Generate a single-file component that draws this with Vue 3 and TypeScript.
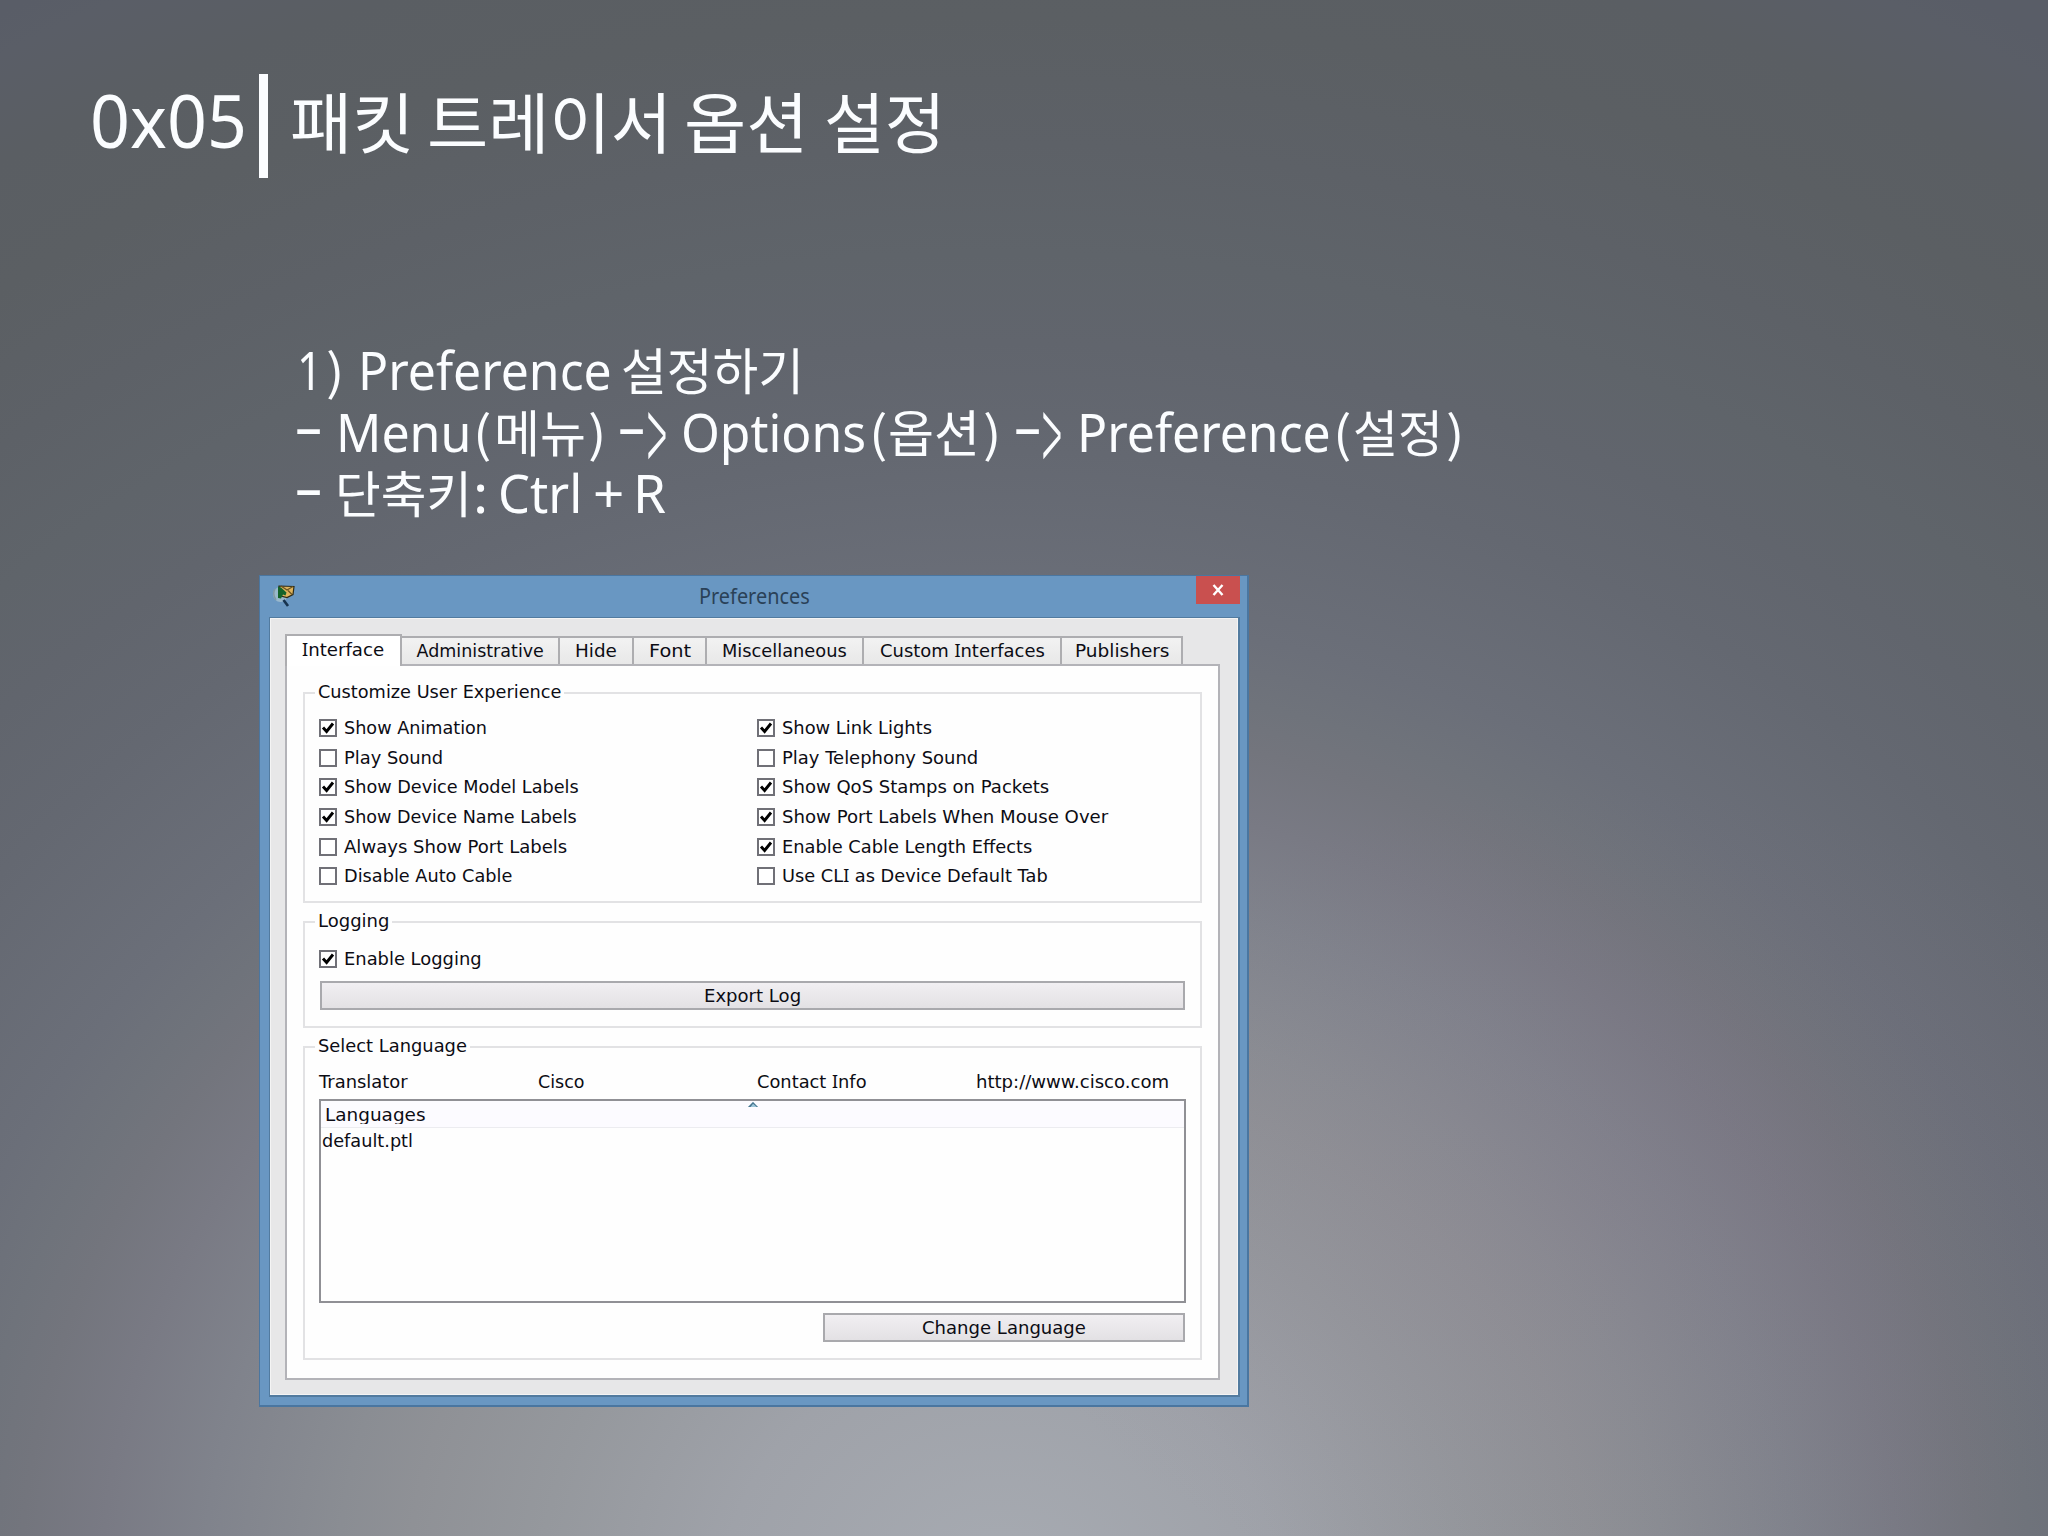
<script setup lang="ts">
import { defineComponent, h, onMounted, ref } from 'vue'

const Fit = defineComponent({
  props: {
    text: { type: String, required: true },
    w: { type: Number, required: true },
    sy: { type: Number, default: 1 },
  },
  setup(props) {
    const ink = ref<HTMLElement | null>(null)
    const scale = ref(1)
    onMounted(() => {
      if (ink.value) scale.value = props.w / ink.value.offsetWidth
    })
    return () =>
      h('span', { class: 'fit', style: { width: props.w + 'px' } }, [
        h(
          'span',
          { ref: ink, class: 'fit-ink', style: { transform: `scale(${scale.value}, ${props.sy})` } },
          props.text.split(/(I)/).filter(Boolean).map((p) => (p === 'I' ? h('span', { class: 'serif-i' }, p) : p)),
        ),
      ])
  },
})

interface Run { t: string; gap: number; w: number; k: string; sy?: number }
interface Option { t: string; w: number; on: boolean }

const title: Run[] = [
  { t: '패킷', gap: 0, w: 124, k: 'ko' },
  { t: '트레이서', gap: 13, w: 245, k: 'ko' },
  { t: '옵션', gap: 12, w: 124, k: 'ko' },
  { t: '설정', gap: 16, w: 121, k: 'ko' },
]

const lines: Run[][] = [
  [
    { t: '1', gap: -1, w: 25, k: 'la' },
    { t: ')', gap: 4, w: 19, k: 'pa' },
    { t: 'Preference', gap: 13, w: 254, k: 'la' },
    { t: '설정하기', gap: 9, w: 183, k: 'ko' },
  ],
  [
    { t: '-', gap: -4, w: 29, k: 'da' },
    { t: 'Menu', gap: 13, w: 135, k: 'la' },
    { t: '(', gap: 2, w: 19, k: 'pa' },
    { t: '메뉴', gap: 2, w: 92, k: 'ko' },
    { t: ')', gap: 2, w: 19, k: 'pa' },
    { t: '-', gap: 10, w: 29, k: 'da' },
    { t: '>', gap: 1, w: 20, k: 'gt', sy: 2.25 },
    { t: 'Options', gap: 14, w: 185, k: 'la' },
    { t: '(', gap: 3, w: 19, k: 'pa' },
    { t: '옵션', gap: 0, w: 92, k: 'ko' },
    { t: ')', gap: 3, w: 19, k: 'pa' },
    { t: '-', gap: 11, w: 29, k: 'da' },
    { t: '>', gap: 0, w: 20, k: 'gt', sy: 2.25 },
    { t: 'Preference', gap: 15, w: 254, k: 'la' },
    { t: '(', gap: 2, w: 19, k: 'pa' },
    { t: '설정', gap: 1, w: 90, k: 'ko' },
    { t: ')', gap: 3, w: 19, k: 'pa' },
  ],
  [
    { t: '-', gap: -4, w: 29, k: 'da' },
    { t: '단축키', gap: 12, w: 137, k: 'ko' },
    { t: ':', gap: 1, w: 15, k: 'la' },
    { t: 'Ctrl', gap: 10, w: 84, k: 'la' },
    { t: '+', gap: 11, w: 31, k: 'la' },
    { t: 'R', gap: 9, w: 33, k: 'la' },
  ],
]

const tabs = [
  { t: 'Interface', box: 117, w: 82 },
  { t: 'Administrative', box: 158, w: 127 },
  { t: 'Hide', box: 74, w: 42 },
  { t: 'Font', box: 73, w: 42 },
  { t: 'Miscellaneous', box: 157, w: 125 },
  { t: 'Custom Interfaces', box: 198, w: 165 },
  { t: 'Publishers', box: 121, w: 94 },
]

const columns: Option[][] = [
  [
    { t: 'Show Animation', w: 143, on: true },
    { t: 'Play Sound', w: 99, on: false },
    { t: 'Show Device Model Labels', w: 235, on: true },
    { t: 'Show Device Name Labels', w: 233, on: true },
    { t: 'Always Show Port Labels', w: 223, on: false },
    { t: 'Disable Auto Cable', w: 168, on: false },
  ],
  [
    { t: 'Show Link Lights', w: 150, on: true },
    { t: 'Play Telephony Sound', w: 196, on: false },
    { t: 'Show QoS Stamps on Packets', w: 267, on: true },
    { t: 'Show Port Labels When Mouse Over', w: 326, on: true },
    { t: 'Enable Cable Length Effects', w: 250.5, on: true },
    { t: 'Use CLI as Device Default Tab', w: 266, on: false },
  ],
]

const info = [
  { t: 'Translator', w: 89 },
  { t: 'Cisco', w: 47 },
  { t: 'Contact Info', w: 110 },
  { t: 'http://www.cisco.com', w: 193 },
]
</script>

<template>
  <main class="slide">
    <header class="head">
      <span class="num"><Fit text="0x05" :w="157" /></span>
      <i class="bar"></i>
      <span class="name">
        <span v-for="(r, i) in title" :key="i" :style="{ marginLeft: r.gap + 'px' }"><Fit :text="r.t" :w="r.w" /></span>
      </span>
    </header>

    <section class="notes">
      <p v-for="(line, n) in lines" :key="n">
        <span v-for="(r, i) in line" :key="i" :class="r.k" :style="{ marginLeft: r.gap + 'px' }"><Fit :text="r.t" :w="r.w" :sy="r.sy ?? 1" /></span>
      </p>
    </section>

    <section class="window">
      <div class="titlebar">
        <svg class="app-icon" width="24" height="24" viewBox="0 0 24 24">
          <circle cx="8.500" cy="10.500" r="7.500" fill="#a9c3cf" opacity=".75" />
          <path d="M3 5q-3 5 1 11" fill="none" stroke="#8199a5" stroke-width="1.500" />
          <path d="M7 2l15 .5-1 8-6 3-8-2z" fill="#dfb45c" stroke="#2e2c18" stroke-width="1.200" />
          <path d="M9 2l6 4 6-3.500M16 6.500l4 4" fill="none" stroke="#6b5420" stroke-width="1.200" />
          <path d="M6 2.500l3 1 5.500 5-1 3-2.500-1-2 4-3-.5z" fill="#14632a" />
          <path d="M11.500 16l4.500 6" stroke="#17334e" stroke-width="2.600" />
        </svg>
        <span class="caption"><Fit text="Preferences" :w="111" /></span>
        <button class="close" aria-label="Close">
          <svg width="12" height="12" viewBox="0 0 12 12"><path d="M1.500 1l9 10M10.500 1l-9 10" stroke="#fff" stroke-width="2.400" /></svg>
        </button>
      </div>

      <div class="client">
        <nav class="tabs">
          <span v-for="(t, i) in tabs" :key="t.t" class="tab" :class="{ active: i === 0 }" :style="{ width: t.box + 'px' }"><Fit :text="t.t" :w="t.w" /></span>
        </nav>
        <div class="pane">
          <section class="group g1">
            <h2><Fit text="Customize User Experience" :w="243" /></h2>
            <div class="cols">
              <div v-for="(c, n) in columns" :key="n" class="col">
                <label v-for="o in c" :key="o.t" class="opt">
                  <span class="box"><svg v-if="o.on" width="14" height="14" viewBox="0 0 14 14"><path d="M2 6.500l3.600 4L12 2.500" fill="none" stroke="#000" stroke-width="2.900" /></svg></span>
                  <Fit :text="o.t" :w="o.w" />
                </label>
              </div>
            </div>
          </section>

          <section class="group g2">
            <h2><Fit text="Logging" :w="71" /></h2>
            <label class="opt log">
              <span class="box"><svg width="14" height="14" viewBox="0 0 14 14"><path d="M2 6.500l3.600 4L12 2.500" fill="none" stroke="#000" stroke-width="2.900" /></svg></span>
              <Fit text="Enable Logging" :w="138" />
            </label>
            <button class="btn"><Fit text="Export Log" :w="97" /></button>
          </section>

          <section class="group g3">
            <h2><Fit text="Select Language" :w="149" /></h2>
            <div class="info">
              <span v-for="x in info" :key="x.t"><Fit :text="x.t" :w="x.w" /></span>
            </div>
            <div class="list">
              <div class="list-head">
                <div class="list-title"><Fit text="Languages" :w="100" /></div>
                <svg class="sort" width="10" height="5" viewBox="0 0 12 6"><path d="M0 6l6-6 6 6z" fill="#9cc6da" /><path d="M0 6l6-6 6 6-1.500 0L6 2 3 6z" fill="#47748e" /></svg>
              </div>
              <div class="list-row"><Fit text="default.ptl" :w="91" /></div>
            </div>
            <button class="btn change"><Fit text="Change Language" :w="164" /></button>
          </section>
        </div>
      </div>
    </section>
  </main>
</template>

<style>
html, body { margin: 0; overflow: hidden; }
.fit { display: inline-block; white-space: pre; text-align: left; }
.fit-ink { display: inline-block; transform-origin: 0 50%; white-space: pre; }
.window .serif-i { font-family: "Noto Sans", sans-serif; line-height: 0; }
</style>

<style scoped>
* { box-sizing: border-box; }
.slide {
  width: 2048px;
  height: 1536px;
  overflow: hidden;
  color: #fbfdff;
  background:
    radial-gradient(ellipse 620px 420px at 1600px 1200px, rgba(134, 108, 134, .14), rgba(134, 108, 134, 0)),
    radial-gradient(ellipse 2040px 1808px at 1000px 1590px,
    #a7abb2 0, #9fa2a9 13.500%, #95989d 22.500%, #8f9196 29%, #8a8d93 32.500%,
    #80838c 39%, #797a84 44%, #73757d 48%, #6f737b 50.500%, #6b6f79 54%,
    #646871 63%, #61656d 69%, #5f646a 74%, #5d6167 80%, #5b5f63 87%, #5a5e63 93%, #5a5e67 98%, #595d67 100%);
}
.head {
  display: flex;
  height: 202px;
  padding: 74px 0 0 90px;
  line-height: 100px;
}
.num { margin-top: -4px; font: 73px/100px "Noto Sans", sans-serif; }
.bar { width: 9px; height: 104px; margin: 0 0 0 12px; background: #fbfdff; }
.name { display: flex; margin: -5px 0 0 22px; font: 66px/100px "Noto Sans CJK KR", sans-serif; }
.notes { margin: 0 0 0 298px; padding-top: 136px; height: 373px; }
.notes p { display: flex; align-items: baseline; height: 61.500px; margin: 0; line-height: 61px; white-space: nowrap; }
.notes .la { font: 53px/61px "Noto Sans", sans-serif; }
.notes .pa { font: 49px/61px "Noto Sans CJK KR", sans-serif; }
.notes .ko { font: 50px/61px "Noto Sans CJK KR", sans-serif; }
.notes .da { font: 500 50px/61px "Noto Sans", sans-serif; transform: translateY(-7px); }
.notes .gt { font: 300 50px/61px "Noto Sans CJK KR", sans-serif; transform: translateY(-2px); }

.window {
  width: 990px;
  height: 832px;
  margin-left: 259px;
  border: 1px solid #4a76a0;
  border-right-width: 2px;
  border-bottom-width: 2px;
  background: #6997c2;
  color: #0c0c14;
  font: 17.500px/24px "DejaVu Sans", sans-serif;
}
.titlebar { display: flex; height: 41px; }
.app-icon { margin: 8px 0 0 12px; }
.caption { margin: 0 0 0 403px; font: 21.500px/40px "Noto Sans", sans-serif; color: #2a4157; }
.close { width: 44px; height: 28px; margin: 0 7px 0 auto; padding: 0; border: 0; background: #c9504f; display: flex; align-items: center; justify-content: center; }
.client { width: 971px; height: 780px; margin-left: 9px; padding: 16px 17px 0 15px; background: #e7e7e8; border: 1px solid #527b9f; border-right-width: 2px; border-bottom-width: 2px; box-shadow: inset 0 0 0 1px #f4f4f4; }
.tabs { display: flex; align-items: flex-end; height: 30px; }
.tab { height: 28px; border: solid #adadb0; border-width: 2px 2px 0 0; background: linear-gradient(#f2f2f2, #e8e8e8); display: flex; align-items: center; justify-content: center; }
.tab.active { height: 32px; margin-bottom: -2px; padding: 0 2px 2px 0; border-left-width: 2px; background: #fff; position: relative; z-index: 1; }
.pane { width: 935px; height: 716px; padding: 26px 16px 0; background: #fefefe; border: 2px solid #b3b3b8; }
.group { width: 899px; border: 2px solid #e2e2e4; }
.group h2 { width: max-content; height: 24px; margin: -14px 0 0 10px; padding: 0 3px; background: #fefefe; font: inherit; line-height: 25px; }
.g1 { height: 211px; }
.cols { display: grid; grid-template-columns: 438px 1fr; padding: 9px 0 0 14px; }
.opt { display: flex; align-items: center; height: 29.700px; }
.box { width: 18px; height: 18px; margin-right: 7px; border: 2px solid #707077; background: #fff; display: flex; flex: none; }
.g2 { height: 107px; margin-top: 18px; }
.log { margin: 10px 0 0 14px; height: 31px; }
.btn { display: flex; align-items: center; justify-content: center; width: 865px; height: 29px; margin: 7px 0 0 15px; padding: 0; border: 2px solid #a9a9ad; background: linear-gradient(#f1eff2, #e3e1e4); color: inherit; font: inherit; }
.g3 { height: 314px; margin-top: 18px; }
.info { display: grid; grid-template-columns: 219px 219px 219px 1fr; margin: 12px 0 0 14px; height: 29px; line-height: 24px; }
.info span { height: 24px; }
.list { width: 867px; height: 204px; margin: 0 0 0 14px; border: 2px solid #909095; background: #fefefe; }
.list-head { position: relative; height: 27px; padding-left: 4px; border-bottom: 1px solid #ececf0; background: #fcfbff; line-height: 29px; }
.list-title { height: 23px; overflow: hidden; }
.sort { position: absolute; left: 427px; top: 1px; }
.list-row { padding-left: 1px; line-height: 27px; }
.change { width: 362px; margin: 10px 0 0 518px; }
</style>
